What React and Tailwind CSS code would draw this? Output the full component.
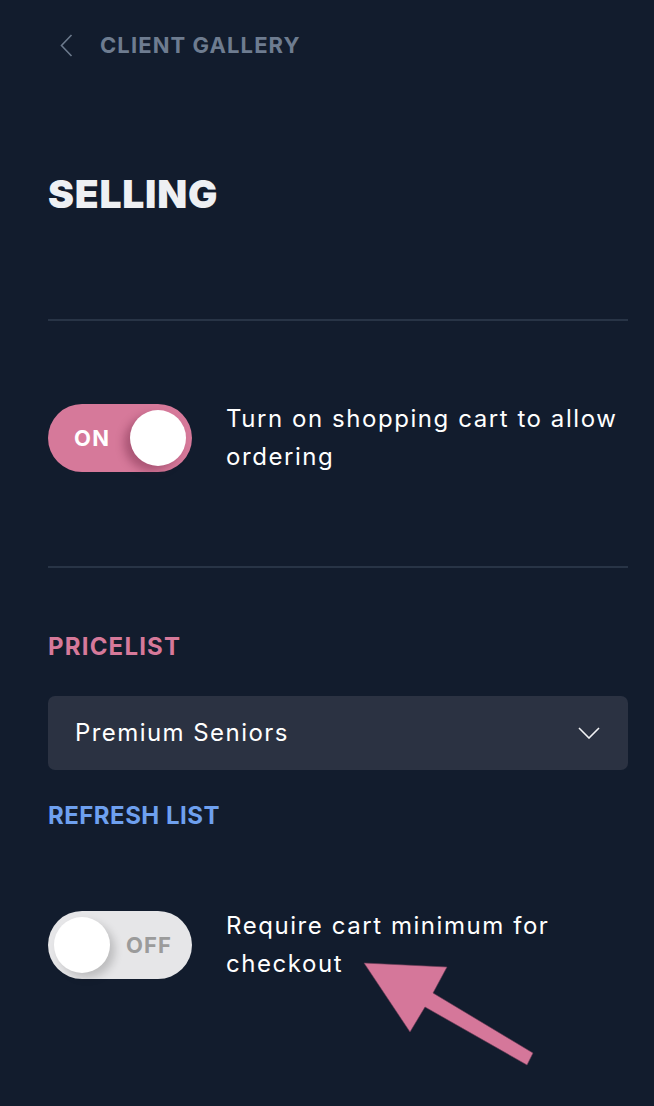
import React, { useState } from 'react';

const font = { fontFamily: 'Inter, "Noto Sans", sans-serif' };

function Toggle({ on, onClick }) {
    if (on) {
        return (
            <button
                onClick={onClick}
                className="relative flex h-[68px] w-[144px] shrink-0 items-center rounded-full bg-[#d6799a] pl-[26px] pr-[6px]"
            >
                <span className="text-[22px] font-bold tracking-[0.06em] text-white">ON</span>
                <span className="ml-auto h-[56px] w-[56px] rounded-full bg-white shadow-[-6px_5px_8px_rgba(90,20,50,0.35)]"></span>
            </button>
        );
    }
    return (
        <button
            onClick={onClick}
            className="relative flex h-[68px] w-[144px] shrink-0 items-center rounded-full bg-[#e6e6e8] pl-[6px] pr-[20px]"
        >
            <span className="h-[56px] w-[56px] rounded-full bg-white shadow-[5px_5px_8px_rgba(0,0,0,0.18)]"></span>
            <span className="ml-auto text-[22px] font-bold tracking-[0.05em] text-[#9b9b9b]">OFF</span>
        </button>
    );
}

export default function App() {
    const [cartOn, setCartOn] = useState(true);
    const [minOn, setMinOn] = useState(false);

    return (
        <div className="relative min-h-screen w-full overflow-hidden bg-[#121c2d] pl-12 pr-[26px]" style={font}>
            {/* header */}
            <div className="flex h-[90px] items-center">
                <svg width="13" height="23" viewBox="0 0 13 23" className="ml-[12px]">
                    <path d="M11.5 1 L1.5 11.5 L11.5 22" fill="none" stroke="#6b798c" strokeWidth="1.6" />
                </svg>
                <span className="ml-[27px] text-[22px] font-bold leading-none tracking-[0.05em] text-[#6e7c90]">
                    CLIENT GALLERY
                </span>
            </div>

            <h1 className="mt-[84px] text-[39px] font-black leading-none tracking-[0.02em] text-[#eef0f3]">SELLING</h1>

            <div className="mt-[106px] h-[2px] bg-[#283446]"></div>

            <div className="mt-[79px] flex items-center gap-[34px]">
                <Toggle on={cartOn} onClick={() => setCartOn(!cartOn)} />
                <p className="text-[24px] leading-[38px] tracking-[0.065em] text-white">Turn on shopping cart to allow ordering</p>
            </div>

            <div className="mt-[90px] h-[2px] bg-[#283446]"></div>

            <h2 className="mt-[67px] text-[24px] font-bold leading-6 tracking-[0.05em] text-[#d6799a]">PRICELIST</h2>

            <button className="mt-[37px] flex h-[74px] w-full items-center rounded-[7px] bg-[#2b3242] pl-[27px] pr-[28px]">
                <span className="text-[24px] tracking-[0.06em] text-white">Premium Seniors</span>
                <svg width="22" height="12" viewBox="0 0 22 12" className="ml-auto">
                    <path d="M1 1 L11 11 L21 1" fill="none" stroke="#f2f3f5" strokeWidth="1.6" />
                </svg>
            </button>

            <div className="mt-[34px] text-[24px] font-bold leading-6 tracking-[0.02em] text-[#6ea0ef]">REFRESH LIST</div>

            <div className="mt-[79px] flex items-center gap-[34px]">
                <Toggle on={minOn} onClick={() => setMinOn(!minOn)} />
                <p className="text-[24px] leading-[38px] tracking-[0.065em] text-white">Require cart minimum for checkout</p>
            </div>

            {/* annotation arrow */}
            <svg className="pointer-events-none absolute left-0 top-0" width="654" height="1106">
                <polygon
                    points="364,963 447,967 433,993 533,1053 527,1065 425,1007 410,1032"
                    fill="#d5779a"
                    stroke="#6a3a55"
                    strokeWidth="0.6"
                />
            </svg>
        </div>
    );
}
